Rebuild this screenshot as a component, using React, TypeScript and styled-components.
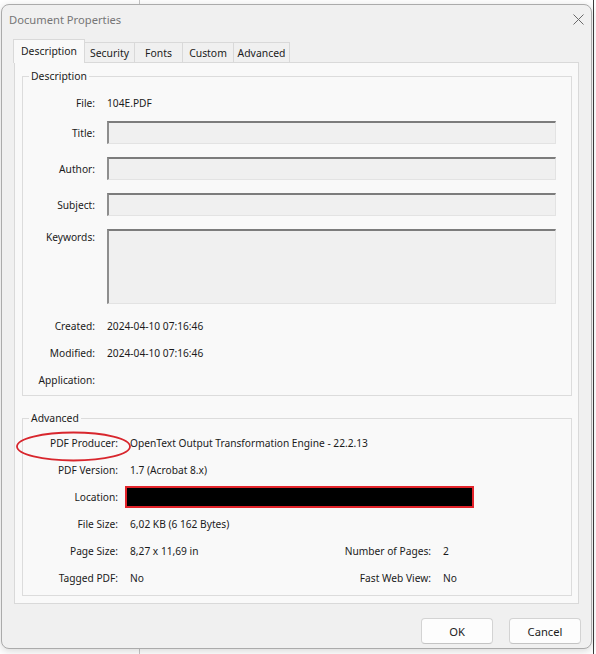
import React from "react";
import styled, { createGlobalStyle } from "styled-components";

const GlobalStyle = createGlobalStyle`
  html, body { margin: 0; padding: 0; }
  body {
    width: 596px;
    height: 654px;
    overflow: hidden;
    background:
      linear-gradient(#c6c6c6, #c6c6c6) 139px 0 / 1px 100% no-repeat,
      linear-gradient(#3c3c3c, #3c3c3c) 593px 0 / 1px 100% no-repeat,
      #ffffff;
    font-family: "Noto Sans", "Open Sans", sans-serif;
    color: #1b1b1b;
  }
`;

const Dialog = styled.div`
  box-sizing: border-box;
  margin: 4px 0 0 1px;
  width: 591px;
  height: 645px;
  background: #f0f0f0;
  border: 1px solid #ababab;
  border-radius: 8px;
  box-shadow: 0 2px 8px rgba(0, 0, 0, 0.16);
  display: flex;
  flex-direction: column;
`;

const TitleBar = styled.div`
  height: 34px;
  display: flex;
  align-items: flex-start;
  padding: 7px 7px 0 7px;
  box-sizing: border-box;
`;

const Title = styled.div`
  font-size: 11.2px;
  line-height: 16px;
  color: #767676;
`;

const CloseIcon = styled.svg`
  margin: 2px 0 0 auto;
  width: 11px;
  height: 11px;
`;

const TabStrip = styled.div`
  display: flex;
  align-items: flex-end;
  height: 24px;
  margin: 0 0 -1px 11px;
  position: relative;
  z-index: 1;
`;

const Tab = styled.div<{ $w: number; $active?: boolean }>`
  box-sizing: border-box;
  width: ${(p) => p.$w}px;
  height: ${(p) => (p.$active ? 24 : 20)}px;
  margin-bottom: ${(p) => (p.$active ? 0 : 1)}px;
  display: flex;
  align-items: center;
  justify-content: center;
  font-size: 10.4px;
  color: #1b1b1b;
  background: ${(p) => (p.$active ? "#f9f9f9" : "#f0f0f0")};
  border: 1px solid #d9d9d9;
  border-bottom: none;
  border-left: ${(p) => (p.$active ? "1px solid #d9d9d9" : "none")};
  padding-bottom: ${(p) => (p.$active ? 2 : 0)}px;
`;

const Panel = styled.div`
  margin: 0 12px;
  background: #f9f9f9;
  border: 1px solid #d9d9d9;
  padding: 6px 6px 7px 7px;
`;

const Group = styled.fieldset<{ $gapTop?: number }>`
  margin: ${(p) => p.$gapTop ?? 0}px 0 0 0;
  padding: 0;
  min-width: 0;
  border: 1px solid #dcdcdc;
`;

const Legend = styled.legend`
  margin-left: 6px;
  padding: 0 2px;
  font-size: 10.4px;
  line-height: 14px;
  color: #1b1b1b;
`;

const DescBody = styled.div`
  padding: 6px 15px 2px 0;
`;

const Row = styled.div<{ $field?: boolean; $top?: boolean }>`
  display: grid;
  grid-template-columns: 72px 1fr;
  column-gap: 12px;
  align-items: ${(p) => (p.$top ? "start" : "center")};
  height: ${(p) => (p.$field ? "auto" : "27px")};
  padding: ${(p) => (p.$field ? "5px 0 8px" : "0")};
`;

const Label = styled.div`
  text-align: right;
  font-size: 10.2px;
  line-height: 16px;
  white-space: nowrap;
  position: relative;
`;

const Value = styled.div<{ $pad?: number }>`
  font-size: 10.2px;
  line-height: 16px;
  white-space: nowrap;
  padding-left: ${(p) => p.$pad ?? 0}px;
`;

const TextField = styled.input`
  box-sizing: border-box;
  display: block;
  width: 100%;
  height: 23px;
  margin: 0;
  padding: 0 4px;
  background: #f0f0f0;
  border-style: solid;
  border-width: 2px 1px 1px 2px;
  border-color: #7c7c7c #e3e3e3 #e3e3e3 #8e8e8e;
  outline: none;
  font: inherit;
`;

const TextArea = styled.textarea`
  box-sizing: border-box;
  display: block;
  width: 100%;
  height: 75px;
  margin: 0;
  padding: 2px 4px;
  resize: none;
  background: #f0f0f0;
  border-style: solid;
  border-width: 2px 1px 1px 2px;
  border-color: #7c7c7c #e3e3e3 #e3e3e3 #8e8e8e;
  outline: none;
  font: inherit;
`;

const AdvGrid = styled.div`
  display: grid;
  grid-template-columns: 95px 199px 100px 1fr;
  grid-auto-rows: 27px;
  column-gap: 7px;
  align-items: center;
  padding: 4px 0 4px 0;
`;

const Wide = styled.div`
  grid-column: 2 / -1;
`;

const Redacted = styled.div`
  box-sizing: border-box;
  width: 349px;
  height: 22px;
  background: #000;
  border: 2px solid #e3242b;
`;

const Circle = styled.svg`
  position: absolute;
  left: -8px;
  top: -4px;
  width: 118px;
  height: 32px;
  overflow: visible;
  pointer-events: none;
`;

const Footer = styled.div`
  flex: 1;
  display: flex;
  justify-content: flex-end;
  align-items: flex-start;
  gap: 16px;
  padding: 14px 10px 0 0;
`;

const Button = styled.button`
  box-sizing: border-box;
  width: 72px;
  height: 26px;
  background: #fdfdfd;
  border: 1px solid #d3d3d3;
  border-bottom-color: #c4c4c4;
  border-radius: 4px;
  font-family: inherit;
  font-size: 11.2px;
  color: #1b1b1b;
  padding: 0;
`;

const tabs = [
  { name: "Description", w: 72, active: true },
  { name: "Security", w: 50 },
  { name: "Fonts", w: 48 },
  { name: "Custom", w: 51 },
  { name: "Advanced", w: 56 },
];

export default function App() {
  return (
    <>
      <GlobalStyle />
      <Dialog>
        <TitleBar>
          <Title>Document Properties</Title>
          <CloseIcon viewBox="0 0 11 11">
            <path d="M0.5 0.5 L10.5 10.5 M10.5 0.5 L0.5 10.5" stroke="#6a6a6a" strokeWidth="1" fill="none" />
          </CloseIcon>
        </TitleBar>

        <TabStrip>
          {tabs.map((t) => (
            <Tab key={t.name} $w={t.w} $active={t.active}>
              {t.name}
            </Tab>
          ))}
        </TabStrip>

        <Panel>
          <Group>
            <Legend>Description</Legend>
            <DescBody>
              <Row>
                <Label>File:</Label>
                <Value>104E.PDF</Value>
              </Row>
              <Row $field>
                <Label>Title:</Label>
                <TextField readOnly />
              </Row>
              <Row $field>
                <Label>Author:</Label>
                <TextField readOnly />
              </Row>
              <Row $field>
                <Label>Subject:</Label>
                <TextField readOnly />
              </Row>
              <Row $field $top>
                <Label>Keywords:</Label>
                <TextArea readOnly />
              </Row>
              <Row>
                <Label>Created:</Label>
                <Value>2024-04-10 07:16:46</Value>
              </Row>
              <Row>
                <Label>Modified:</Label>
                <Value>2024-04-10 07:16:46</Value>
              </Row>
              <Row>
                <Label>Application:</Label>
                <Value />
              </Row>
            </DescBody>
          </Group>

          <Group $gapTop={15}>
            <Legend>Advanced</Legend>
            <AdvGrid>
              <Label>
                PDF Producer:
                <Circle viewBox="0 0 118 32">
                  <ellipse cx="58.5" cy="15.5" rx="56.5" ry="14" fill="none" stroke="#d8262d" strokeWidth="1.8" />
                </Circle>
              </Label>
              <Wide>
                <Value $pad={5}>OpenText Output Transformation Engine - 22.2.13</Value>
              </Wide>

              <Label>PDF Version:</Label>
              <Wide>
                <Value $pad={5}>1.7 (Acrobat 8.x)</Value>
              </Wide>

              <Label>Location:</Label>
              <Wide>
                <Redacted />
              </Wide>

              <Label>File Size:</Label>
              <Wide>
                <Value $pad={5}>6,02 KB (6 162 Bytes)</Value>
              </Wide>

              <Label>Page Size:</Label>
              <Value $pad={5}>8,27 x 11,69 in</Value>
              <Label>Number of Pages:</Label>
              <Value $pad={5}>2</Value>

              <Label>Tagged PDF:</Label>
              <Value $pad={5}>No</Value>
              <Label>Fast Web View:</Label>
              <Value $pad={5}>No</Value>
            </AdvGrid>
          </Group>
        </Panel>

        <Footer>
          <Button>OK</Button>
          <Button>Cancel</Button>
        </Footer>
      </Dialog>
    </>
  );
}
